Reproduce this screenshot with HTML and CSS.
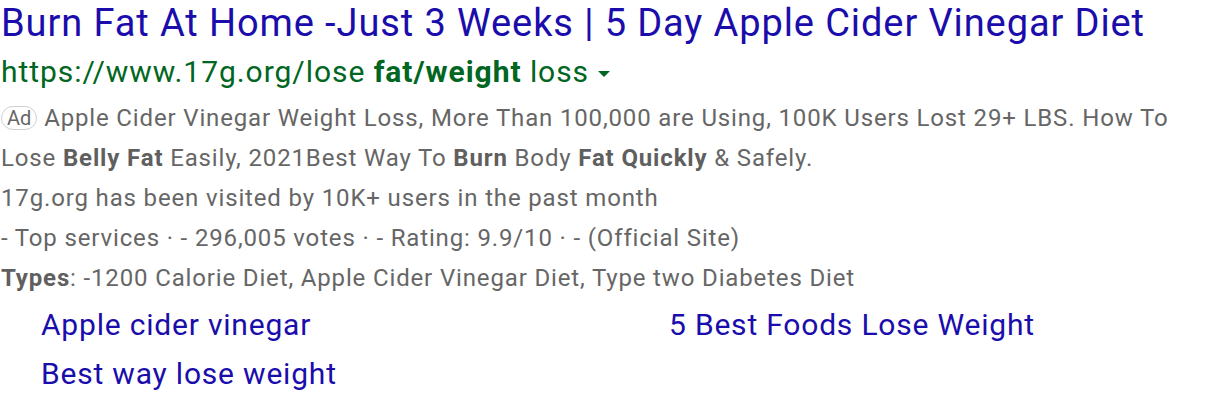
FILE: index.html
```html
<!DOCTYPE html>
<html>
<head>
<meta charset="utf-8">
<link rel="stylesheet" href="styles.css">
</head>
<body>
<div class="ad">
  <a class="title" href="#">Burn Fat At Home -Just 3 Weeks | 5 Day Apple Cider Vinegar Diet</a>
  <div class="url">https://www.17g.org/lose <b>fat/weight</b> loss <span class="arrow"></span></div>
  <div class="desc">
    <div><span class="badge">Ad</span> Apple Cider Vinegar Weight Loss, More Than 100,000 are Using, 100K Users Lost 29+ LBS. How To Lose <b>Belly Fat</b> Easily, 2021Best Way To <b>Burn</b> Body <b>Fat Quickly</b> &amp; Safely.</div>
    <div>17g.org has been visited by 10K+ users in the past month</div>
    <div>- Top services · - 296,005 votes · - Rating: 9.9/10 · - (Official Site)</div>
    <div><b>Types</b>: -1200 Calorie Diet, Apple Cider Vinegar Diet, Type two Diabetes Diet</div>
  </div>
  <div class="links">
    <a href="#">Apple cider vinegar</a>
    <a href="#">5 Best Foods Lose Weight</a>
    <a href="#">Best way lose weight</a>
  </div>
</div>
</body>
</html>
```
FILE: styles.css
```css
html, body {
  margin: 0;
  padding: 0;
  background: #fff;
}
body {
  font-family: Roboto, "Liberation Sans", sans-serif;
}
.ad {
  padding: 0 0 0 1px;
}
.title {
  display: block;
  color: #1a0dab;
  text-decoration: none;
  font-size: 38px;
  letter-spacing: 0.9px;
  line-height: 46px;
  white-space: nowrap;
}
.url {
  color: #006621;
  font-size: 30px;
  letter-spacing: 0.95px;
  line-height: 52px;
  white-space: nowrap;
}
.url b {
  font-weight: 700;
}
.arrow {
  display: inline-block;
  width: 0;
  height: 0;
  border-left: 6px solid transparent;
  border-right: 6px solid transparent;
  border-top: 6px solid #006621;
  vertical-align: middle;
  margin-left: 1px;
}
.desc {
  color: #666;
  font-size: 24px;
  letter-spacing: 0.85px;
  line-height: 40px;
  width: 1195px;
}
.desc b {
  color: #5f5f5f;
  font-weight: 700;
}
.badge {
  display: inline-block;
  border: 1px solid #d0d0d0;
  border-radius: 12px;
  font-size: 20px;
  letter-spacing: 0;
  line-height: 22px;
  padding: 0 5px;
  vertical-align: 1px;
  color: #666;
}
.links {
  display: grid;
  grid-template-columns: 628px 1fr;
  padding: 2px 0 0 40px;
}
.links a {
  color: #1a0dab;
  text-decoration: none;
  font-size: 30px;
  letter-spacing: 0.8px;
  line-height: 49px;
}
```
